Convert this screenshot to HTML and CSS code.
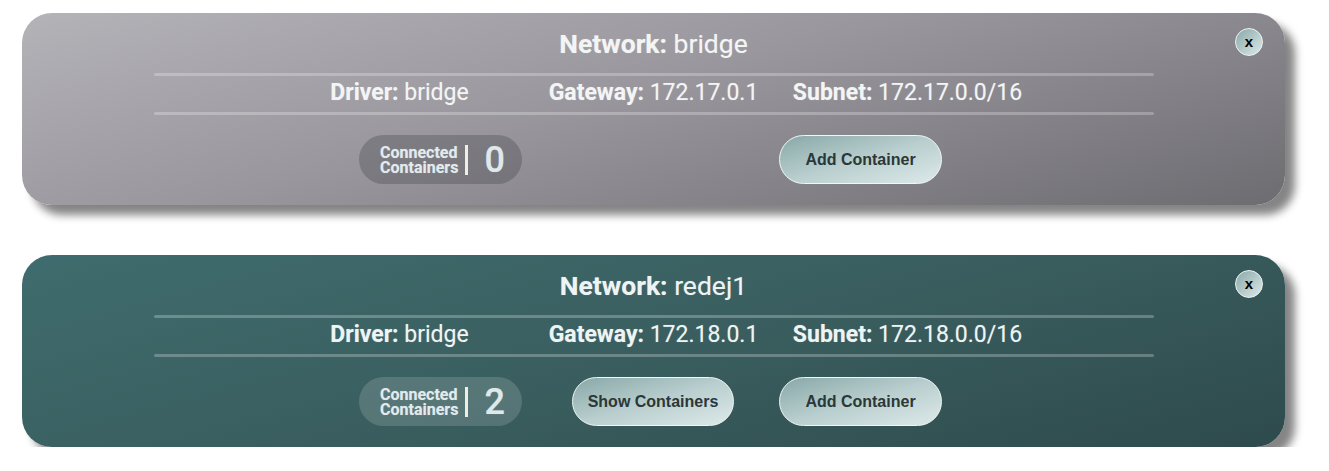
FILE: index.html
```html
<!DOCTYPE html>
<html>
<head>
<meta charset="utf-8">
<link rel="stylesheet" href="styles.css">
</head>
<body>
<div class="list">
  <div class="card card-grey">
    <button class="close">x</button>
    <div class="title"><b>Network:</b> bridge</div>
    <div class="rule"></div>
    <div class="details">
      <span><b>Driver:</b> bridge</span>
      <span><b>Gateway:</b> 172.17.0.1</span>
      <span><b>Subnet:</b> 172.17.0.0/16</span>
    </div>
    <div class="rule"></div>
    <div class="actions">
      <div class="counter">
        <div class="counter-label">Connected<br>Containers</div>
        <div class="counter-bar"></div>
        <div class="counter-num">0</div>
      </div>
      <button class="btn btn-show is-hidden">Show Containers</button>
      <button class="btn">Add Container</button>
    </div>
  </div>
  <div class="card card-teal">
    <button class="close">x</button>
    <div class="title"><b>Network:</b> redej1</div>
    <div class="rule"></div>
    <div class="details">
      <span><b>Driver:</b> bridge</span>
      <span><b>Gateway:</b> 172.18.0.1</span>
      <span><b>Subnet:</b> 172.18.0.0/16</span>
    </div>
    <div class="rule"></div>
    <div class="actions">
      <div class="counter">
        <div class="counter-label">Connected<br>Containers</div>
        <div class="counter-bar"></div>
        <div class="counter-num">2</div>
      </div>
      <button class="btn btn-show">Show Containers</button>
      <button class="btn">Add Container</button>
    </div>
  </div>
</div>
</body>
</html>
```

FILE: styles.css
```css
html, body {
  margin: 0;
  padding: 0;
  background: #ffffff;
}
body {
  font-family: Roboto, "Liberation Sans", Arial, sans-serif;
}
.list {
  display: flex;
  flex-direction: column;
  gap: 50px;
  padding: 13px 0 0 22px;
}
.card {
  position: relative;
  box-sizing: border-box;
  width: 1263px;
  height: 192px;
  padding-top: 11px;
  border-radius: 30px;
  box-shadow: 10px 10px 9px #858585;
  color: #f3f5f5;
  display: flex;
  flex-direction: column;
  align-items: center;
  text-shadow: 0 0 1px rgba(255, 255, 255, 0.35);
}
.card-grey {
  background: linear-gradient(165deg, #b4b3b8 0%, #99979d 45%, #6d6c71 100%);
}
.card-teal {
  background: linear-gradient(165deg, #3f6c6e 0%, #3a5e5f 50%, #2e4a4c 100%);
  color: #eef4f4;
}
.title {
  font-size: 26.5px;
  line-height: 40px;
  height: 40px;
  margin-bottom: 9px;
}
.title b, .details b {
  font-weight: 700;
}
.rule {
  width: 1000px;
  height: 3px;
  background: rgba(255, 255, 255, 0.25);
  border-radius: 2px;
}
.details {
  width: 762px;
  display: grid;
  grid-template-columns: 1fr 1fr 1fr;
  font-size: 23px;
  line-height: 34px;
  height: 34px;
  padding-bottom: 2px;
  text-align: center;
  white-space: nowrap;
}
.actions {
  margin-top: 20px;
  display: flex;
  align-items: center;
  justify-content: center;
  width: 100%;
  box-sizing: border-box;
  padding-right: 6px;
}
.counter {
  box-sizing: border-box;
  width: 163px;
  height: 49px;
  border-radius: 25px;
  display: flex;
  align-items: center;
  padding-left: 21px;
  color: #e1ebee;
}
.card-grey .counter {
  background: rgba(60, 60, 65, 0.3);
}
.card-teal .counter {
  background: rgba(255, 255, 255, 0.15);
}
.counter-label {
  font-size: 16px;
  font-weight: 700;
  line-height: 15px;
}
.counter-bar {
  width: 3px;
  height: 30px;
  background: #efeee2;
  margin: 0 16px 0 7px;
}
.counter-num {
  font-size: 36px;
  font-weight: 500;
  line-height: 1;
  color: #dfe8ea;
}
.btn {
  box-sizing: border-box;
  width: 163px;
  height: 49px;
  border-radius: 25px;
  border: 1px solid #f1f6f6;
  background: linear-gradient(to bottom right, #89a8a8 0%, #b9cece 50%, #dde9e9 100%);
  font-family: "Liberation Sans", Arial, sans-serif;
  font-weight: 700;
  font-size: 16px;
  color: #2b3739;
  padding: 0;
}
.btn-show {
  width: 162px;
  margin: 0 45px 0 50px;
}
.is-hidden {
  visibility: hidden;
}
.close {
  position: absolute;
  top: 15px;
  right: 22px;
  box-sizing: border-box;
  width: 28px;
  height: 28px;
  border-radius: 50%;
  border: 1px solid #eef4f4;
  background: linear-gradient(to bottom right, #89a8a8 0%, #dde9e9 100%);
  font-family: "Liberation Sans", Arial, sans-serif;
  font-weight: 700;
  font-size: 15px;
  line-height: 24px;
  color: #000;
  padding: 0;
  text-align: center;
  text-shadow: none;
}
```
